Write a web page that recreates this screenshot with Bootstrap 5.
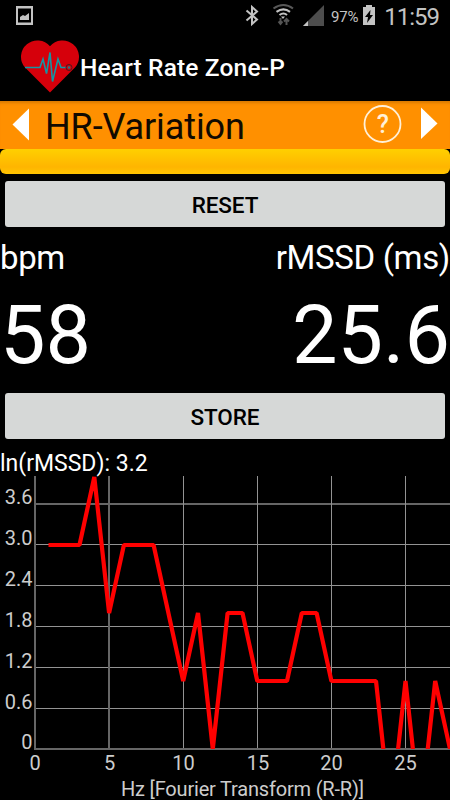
<!DOCTYPE html>
<html lang="en">
<head>
<meta charset="utf-8">
<meta name="viewport" content="width=device-width, initial-scale=1">
<title>Heart Rate Zone-P</title>
<link href="https://cdn.jsdelivr.net/npm/bootstrap@5.3.0/dist/css/bootstrap.min.css" rel="stylesheet">
<style>
body { font-family: Roboto, sans-serif; background: #000; color: #fff; line-height: 1; }
.screen { width: 450px; height: 800px; }
.screen svg { display: block; flex: none; }
.status { height: 34px; color: #c3c3c3; }
.status-pct { font-size: 15px; letter-spacing: -.2px; padding-top: 1px; }
.status-time { font-size: 24px; letter-spacing: -1px; padding-right: 11px; }
.appbar { height: 67px; font-size: 24.500px; font-weight: 500; letter-spacing: .15px; }
.app-name { padding-top: 2px; }
.titlebar { height: 48px; background: #ff9000; box-shadow: inset 0 4px 3px -2px #d87900; color: #110a00; font-size: 36px; letter-spacing: -.1px; }
.page-name { padding-top: 4px; }
.zone-bar { height: 25px; border-radius: 6px; background: linear-gradient(#ffd000, #ffb500 72%, #ffc400); }
.btn-flat { height: 46px; margin: 0 5px; border-radius: 3px; font-size: 22.500px; font-weight: 500; letter-spacing: -.1px; line-height: 1; padding: 2px 0 0; --bs-btn-bg: #d6d8d7; --bs-btn-color: #000; --bs-btn-border-width: 0; }
.reset { margin-top: 7px; margin-bottom: 1px; }
.labels { height: 54px; font-size: 33px; letter-spacing: -.35px; padding-top: 13px; }
.values { height: 108px; font-size: 81px; padding-top: 1px; }
.ln-line { height: 37px; font-size: 23px; padding-top: 13px; }
.axis-text { font-size: 20px; fill: #cdcdcd; }
</style>
</head>
<body>
<main class="screen d-flex flex-column overflow-hidden">
  <header class="status d-flex align-items-center">
    <svg width="331" height="34" viewBox="0 0 331 34">
      <path fill="#c3c3c3" fill-rule="evenodd" d="M16 6h17v19H16zM18 8.500v14h13v-14z"/>
      <path fill="#c3c3c3" d="M20 20v-3l3-2 2 1 4-3v7z"/>
      <path d="M246.500 10.500l10.500 9-5 4.500V7l5 4.500-10.500 9" fill="none" stroke="#c3c3c3" stroke-width="2"/>
      <g fill="none" stroke-width="2.100">
        <path d="M273.500 8.500q10-7 19.500 0" stroke="#585858"/>
        <path d="M276.500 11.800q7-5 13.500 0M279.500 15q4-3 7.500 0" stroke="#c3c3c3"/>
      </g>
      <path d="M281 16.500h4l-2 2.500z" fill="#c3c3c3"/>
      <path d="M280.500 18v6M278.500 21.500l2 2.500 2-2.500M286.500 25v-6M284 21.500l2.500-2.500 2.500 2.500" fill="none" stroke="#555" stroke-width="2"/>
      <path d="M303 26L324 5v21z" fill="#4d4d4d"/><path d="M303 26l5-5v5z" fill="#c3c3c3"/>
    </svg>
    <span class="status-pct">97%</span>
    <svg class="ms-1" width="14" height="34" viewBox="0 0 14 34"><path d="M1 7h3V5h6v2h3v18H1z" fill="#c3c3c3"/><path d="M8.500 10L3 17h3l-1 6 6-8H8z" fill="#000"/></svg>
    <span class="status-time ms-auto">11:59</span>
  </header>

  <div class="appbar d-flex align-items-center">
    <svg width="80" height="67" viewBox="0 34 80 67">
      <path d="M50 92.500L24.800 67.300A16.300 16.300 0 0 1 50 46.300A16.300 16.300 0 0 1 75.200 67.300z" fill="#d6000b"/>
      <path d="M25 67.500h15l3-8.500 3.500 14.500L50 52.500l2.500 29L58 59l3 8.500h5" fill="none" stroke="#1396a5" stroke-width="1.600"/>
      <circle cx="69" cy="67.500" r="3" fill="none" stroke="#4b1820"/><circle cx="69" cy="67.500" r="1.300" fill="#277884"/>
    </svg>
    <span class="app-name">Heart Rate Zone-P</span>
  </div>

  <nav class="titlebar d-flex align-items-center">
    <svg width="45" height="48" viewBox="0 101 45 48"><path d="M29 108.500v32L12.500 124.500z" fill="#fff"/></svg>
    <span class="page-name">HR-Variation</span>
    <svg class="ms-auto" width="90" height="48" viewBox="360 101 90 48">
      <circle cx="382.500" cy="124" r="18" fill="none" stroke="#fff0d8" stroke-width="1.800"/>
      <text x="382.700" y="132.500" text-anchor="middle" font-size="25" font-weight="500" fill="#fff0d8">?</text>
      <path d="M421 107.500v31.500L437.500 123.500z" fill="#fff"/>
    </svg>
  </nav>
  <div class="zone-bar"></div>

  <button type="button" class="btn btn-flat reset">RESET</button>
  <div class="labels d-flex justify-content-between"><span>bpm</span><span>rMSSD (ms)</span></div>
  <div class="values d-flex justify-content-between align-items-center"><span>58</span><span>25.6</span></div>
  <button type="button" class="btn btn-flat mt-1">STORE</button>
  <div class="ln-line">ln(rMSSD): 3.2</div>

  <svg width="450" height="324" viewBox="0 476 450 324">
    <defs><clipPath id="plot"><rect x="35" y="476" width="415" height="273"/></clipPath></defs>
    <g stroke="#939393" stroke-width="1">
      <path d="M35 504h415" stroke="#666" stroke-width="2"/>
      <path d="M35 544.500h415M35 585.500h415M35 626.500h415M35 667.500h415M35 708.500h415M183.500 476v273M257.500 476v273M331.500 476v273M405.500 476v273"/>
      <path d="M35 476v274M109 476v273M35 749h415" stroke="#666" stroke-width="2"/>
    </g>
    <polyline clip-path="url(#plot)" fill="none" stroke="#f00" stroke-width="4.200" stroke-linejoin="bevel" points="48.500,545 79.500,545 94.300,477 109.100,613 123.900,545 153.600,545 183.200,681 198,613 212.800,749 227.600,613 242.500,613 257.300,681 287,681 301.800,613 316.600,613 331.400,681 376,681 390.700,817 405.500,681 420.300,817 435.200,681 450,749"/>
    <g class="axis-text" text-anchor="end">
      <text x="32.500" y="504">3.6</text><text x="32.500" y="545">3.0</text><text x="32.500" y="586">2.4</text>
      <text x="32.500" y="627">1.8</text><text x="32.500" y="668">1.2</text><text x="32.500" y="709">0.6</text><text x="32.500" y="749">0</text>
    </g>
    <g class="axis-text" text-anchor="middle">
      <text x="35" y="770">0</text><text x="109.500" y="770">5</text><text x="183.500" y="770">10</text>
      <text x="258" y="770">15</text><text x="331.500" y="770">20</text><text x="405.500" y="770">25</text>
      <text x="242.500" y="796" textLength="243">Hz [Fourier Transform (R-R)]</text>
    </g>
  </svg>
</main>
<script src="https://cdn.jsdelivr.net/npm/bootstrap@5.3.0/dist/js/bootstrap.bundle.min.js"></script>
</body>
</html>
